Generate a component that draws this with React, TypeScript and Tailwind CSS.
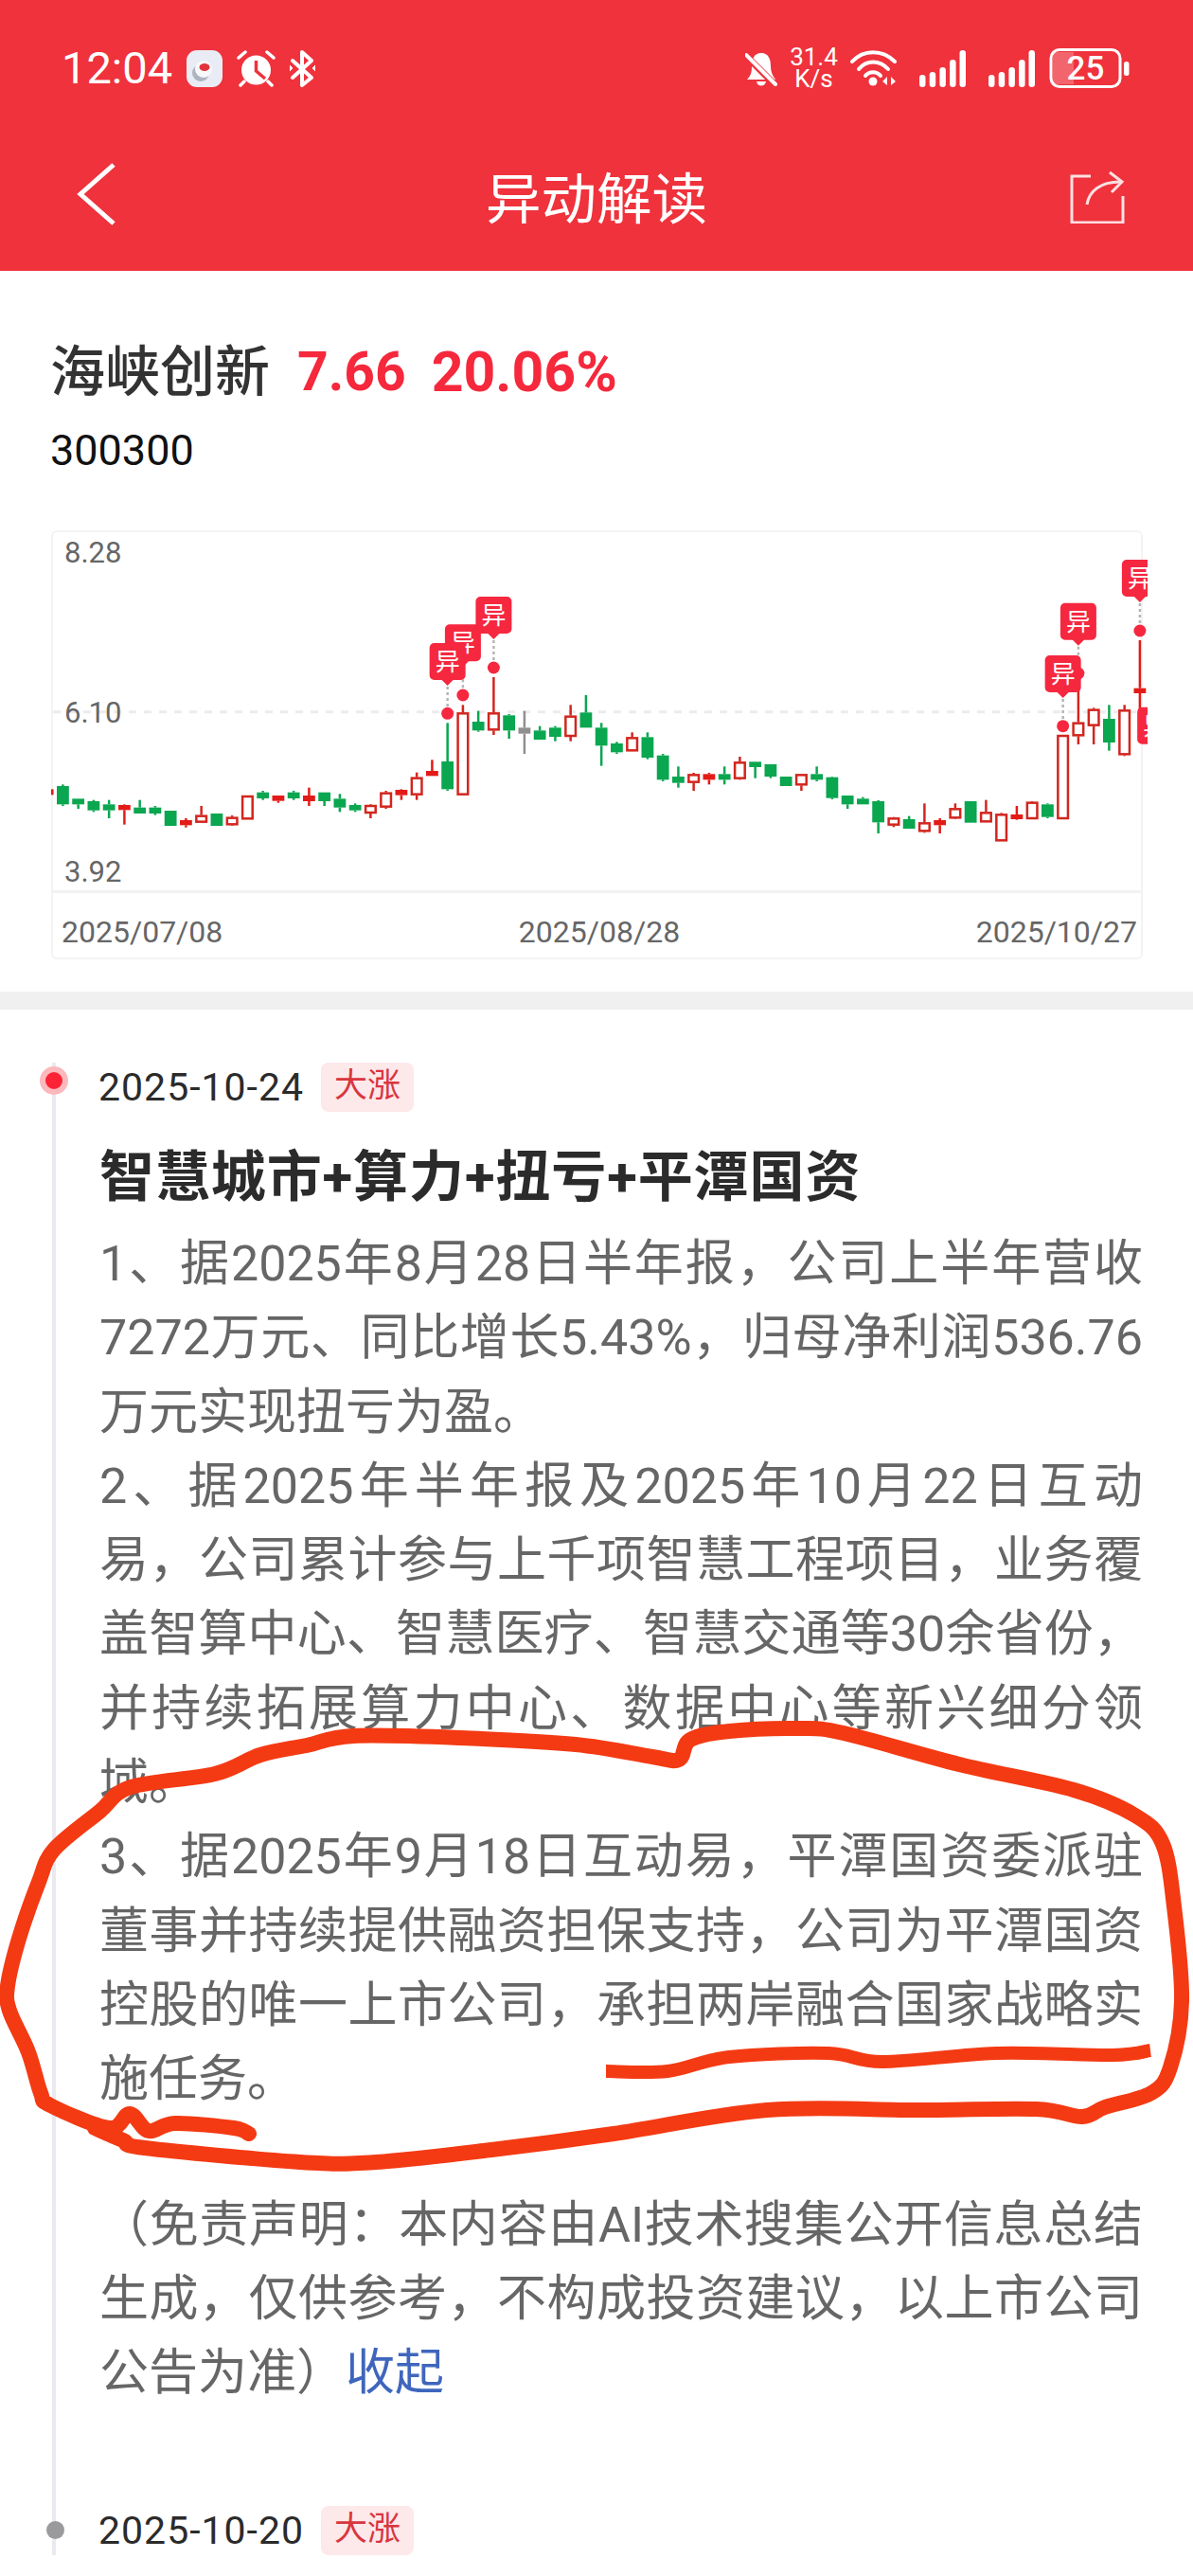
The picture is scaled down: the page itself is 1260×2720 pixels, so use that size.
// 异动解读 page: status bar, nav, K-line chart, timeline of moves
type Candle = [string, number, number, number, number];

// kind (g green, r hollow red, f solid red, n grey), wick top, body top, body bottom, wick bottom
const candles: Candle[] = [
  ["f", 850, 850, 868, 868],
  ["g", 835, 840, 898, 903],
  ["g", 880, 880, 898, 912],
  ["g", 884, 888, 917, 922],
  ["g", 884, 898, 917, 942],
  ["f", 898, 900, 916, 962],
  ["g", 884, 908, 927, 927],
  ["g", 903, 908, 927, 932],
  ["g", 918, 918, 966, 966],
  ["f", 942, 948, 964, 971],
  ["r", 903, 932, 956, 956],
  ["g", 927, 927, 966, 966],
  ["r", 933, 938, 964, 966],
  ["r", 870, 870, 946, 946],
  ["g", 855, 860, 879, 884],
  ["f", 870, 870, 887, 893],
  ["g", 855, 860, 879, 884],
  ["f", 845, 870, 888, 903],
  ["g", 860, 860, 888, 903],
  ["g", 865, 880, 908, 922],
  ["g", 895, 900, 917, 922],
  ["r", 898, 900, 927, 942],
  ["r", 855, 860, 908, 912],
  ["f", 850, 852, 869, 884],
  ["r", 797, 812, 869, 884],
  ["f", 757, 792, 808, 808],
  ["g", 640, 762, 850, 855],
  ["r", 583, 607, 869, 869],
  ["g", 602, 636, 664, 668],
  ["r", 495, 607, 664, 678],
  ["g", 612, 616, 664, 690],
  ["n", 602, 655, 674, 738],
  ["g", 650, 664, 693, 693],
  ["g", 650, 655, 684, 698],
  ["r", 583, 617, 684, 698],
  ["g", 552, 607, 655, 655],
  ["g", 640, 655, 712, 776],
  ["g", 700, 705, 733, 738],
  ["r", 670, 685, 730, 730],
  ["g", 670, 685, 750, 755],
  ["g", 738, 743, 820, 825],
  ["g", 778, 810, 830, 845],
  ["r", 798, 802, 830, 855],
  ["f", 798, 802, 820, 835],
  ["g", 778, 802, 820, 835],
  ["r", 747, 763, 818, 820],
  ["g", 763, 763, 780, 815],
  ["g", 771, 771, 810, 815],
  ["g", 810, 810, 840, 840],
  ["r", 802, 802, 838, 855],
  ["g", 778, 802, 820, 825],
  ["g", 810, 812, 878, 882],
  ["g", 870, 870, 898, 912],
  ["g", 875, 880, 898, 898],
  ["g", 885, 888, 955, 990],
  ["r", 938, 940, 965, 970],
  ["g", 935, 945, 975, 975],
  ["r", 895, 955, 985, 988],
  ["f", 942, 948, 964, 990],
  ["r", 895, 910, 943, 945],
  ["g", 888, 888, 956, 956],
  ["r", 884, 922, 955, 955],
  ["r", 925, 928, 1015, 1015],
  ["f", 903, 930, 945, 947],
  ["r", 888, 890, 945, 945],
  ["g", 895, 898, 938, 942],
  ["r", 678, 678, 945, 945],
  ["r", 535, 638, 682, 708],
  ["r", 592, 596, 650, 708],
  ["g", 583, 627, 702, 728],
  ["r", 583, 598, 742, 745],
  ["f", 378, 530, 546, 640],
];

// candle index, badge top, dot centre (same measure as the candle values), draw order matters
const markers = [
  { i: 27, top: 328, dot: 552 },
  { i: 26, top: 387, dot: 610 },
  { i: 29, top: 240, dot: 465 },
  { i: 67, top: 260, dot: 483 },
  { i: 66, top: 426, dot: 650 },
  { i: 71, top: 123, dot: 348 },
  { i: 72, top: 590, dot: 815 },
];

const cx = (i: number) => 50.15 + 16.25 * i;
const cy = (v: number) => 550 + v / 3;

const ink = [
  [263, 2253], [247, 2247], [185, 2242], [157, 2250], [137, 2232], [115, 2247], [53, 2223], [43, 2210], [30, 2167],
  [10, 2123], [8, 2097], [20, 2047], [41, 1987], [57, 1953], [105, 1913], [138, 1887], [227, 1873], [275, 1853],
  [324, 1843], [373, 1833], [486, 1835], [608, 1842], [689, 1855], [717, 1858], [729, 1837], [770, 1828], [843, 1825],
  [891, 1830], [1013, 1863], [1134, 1890], [1199, 1917], [1228, 1947], [1240, 2013], [1248, 2113], [1236, 2183],
  [1216, 2210], [1167, 2225], [1143, 2235], [1094, 2227], [972, 2228], [810, 2228], [648, 2253], [519, 2270],
  [397, 2283], [317, 2283], [153, 2268], [130, 2260], [100, 2247],
];

const underline = [
  [640, 2187], [705, 2187], [770, 2172], [875, 2168], [932, 2177], [1053, 2168], [1175, 2170], [1215, 2165],
];

// smooth line through hand-drawn points
function smooth(pts: number[][]) {
  let d = `M${pts[0][0]} ${pts[0][1]}`;
  for (let k = 0; k < pts.length - 1; k++) {
    const p0 = pts[k - 1] || pts[k];
    const p1 = pts[k];
    const p2 = pts[k + 1];
    const p3 = pts[k + 2] || p2;
    const c1x = p1[0] + (p2[0] - p0[0]) / 6;
    const c1y = p1[1] + (p2[1] - p0[1]) / 6;
    const c2x = p2[0] - (p3[0] - p1[0]) / 6;
    const c2y = p2[1] - (p3[1] - p1[1]) / 6;
    d += ` C${c1x} ${c1y} ${c2x} ${c2y} ${p2[0]} ${p2[1]}`;
  }
  return d;
}

function CandleShape({ c, i }: { c: Candle; i: number }) {
  const [kind, wt, bt, bb, wb] = c;
  const x = cx(i);
  const color = kind === "g" ? "#0aa650" : kind === "f" ? "#e31b17" : kind === "n" ? "#8f8f8f" : "#d2261f";
  const hollow = kind === "r";
  return (
    <g>
      <line x1={x} x2={x} y1={cy(wt)} y2={cy(bt)} stroke={color} strokeWidth={2.5} />
      <line x1={x} x2={x} y1={cy(bb)} y2={cy(wb)} stroke={color} strokeWidth={2.5} />
      {hollow ? (
        <rect x={x - 5.3} y={cy(bt) + 1} width={10.6} height={cy(bb) - cy(bt) - 2} fill="#fff" stroke={color} strokeWidth={2.5} />
      ) : (
        <rect x={x - 6.4} y={cy(bt)} width={12.8} height={cy(bb) - cy(bt)} fill={color} />
      )}
    </g>
  );
}

function Marker({ i, top, dot }: { i: number; top: number; dot: number }) {
  const x = cx(i);
  const t = cy(top);
  return (
    <g>
      <line x1={x} x2={x} y1={t + 46} y2={cy(dot)} stroke="#b5b5b5" strokeWidth={2.5} strokeDasharray="3 3" />
      <circle cx={x} cy={cy(dot)} r={6.5} fill="#f5283f" />
      <path
        d={`M${x - 14} ${t} H${x + 14} a5 5 0 0 1 5 5 V${t + 34} a5 5 0 0 1 -5 5 H${x + 6} L${x} ${t + 45} L${x - 6} ${t + 39} H${x - 14} a5 5 0 0 1 -5 -5 V${t + 5} a5 5 0 0 1 5 -5 Z`}
        fill="#f5283f"
      />
      <text x={x} y={t + 29} textAnchor="middle" fontSize={26} fill="#fff" fontFamily="'Noto Sans CJK SC', sans-serif">
        异
      </text>
    </g>
  );
}

function KChart() {
  return (
    <div className="ml-[54px] w-[1153px] h-[453px] border-2 border-[#f3f3f3] rounded-[6px] flex flex-col">
      <div className="relative h-[381px] border-b-[3px] border-[#f2f2f2]">
        <svg className="absolute -left-[2px] -top-[2px] block" width={1158} height={381} viewBox="54 560 1158 381">
          <line x1={56} x2={1212} y1={751.7} y2={751.7} stroke="#ececec" strokeWidth={3} strokeDasharray="8 8" />
          {candles.map((c, i) => (
            <CandleShape key={i} c={c} i={i} />
          ))}
          {markers.map((m) => (
            <Marker key={m.i} {...m} />
          ))}
        </svg>
        <span className="absolute left-[12px] top-[4px] text-[31px] leading-[36px] text-[#666]">8.28</span>
        <span className="absolute left-[12px] top-[173px] text-[31px] leading-[36px] text-[#666]">6.10</span>
        <span className="absolute left-[12px] top-[341px] text-[31px] leading-[36px] text-[#666]">3.92</span>
      </div>
      <div className="flex justify-between pl-[9px] pr-[4px] pt-[23px] text-[32px] leading-[36px] text-[#666]">
        <span>2025/07/08</span>
        <span>2025/08/28</span>
        <span>2025/10/27</span>
      </div>
    </div>
  );
}

function StatusBar() {
  return (
    <div className="mt-[50px] h-[44px] flex items-center justify-between pl-[65px] pr-[67px] text-white">
      <div className="flex items-center">
        <span className="text-[47px] leading-[44px] w-[132px]">12:04</span>
        <svg width={38} height={39} viewBox="0 0 38 39">
          <rect width={38} height={39} rx={11} fill="#e9ecf4" />
          <circle cx={15} cy={24} r={9} fill="#aeb3c0" />
          <circle cx={18} cy={20} r={9} fill="#f7f8fb" />
          <ellipse cx={19} cy={18} rx={5.5} ry={4} fill="#e0343c" />
        </svg>
        <svg className="ml-[15px]" width={41} height={39} viewBox="0 0 41 39">
          <circle cx={20.5} cy={21} r={15.5} fill="#fff" />
          <path d="M20.5 11 V22 L30 30" stroke="#ef323c" strokeWidth={3.5} fill="none" />
          <path d="M2 8 L9 2 M39 8 L32 2 M8 33 L4 37 M33 33 L37 37" stroke="#fff" strokeWidth={3.5} strokeLinecap="round" />
        </svg>
        <svg className="ml-[15px]" width={27} height={39} viewBox="0 0 27 39" fill="none" stroke="#fff" strokeWidth={4} strokeLinejoin="round" strokeLinecap="round">
          <path d="M3 11 L23 29 L13 37 V2 L23 11 L3 29" />
          <path d="M0 16 L3 19 L0 22 Z M27 16 L24 19 L27 22 Z" fill="#fff" strokeWidth={1} />
        </svg>
      </div>
      <div className="flex items-center">
        <svg width={34} height={39} viewBox="0 0 34 39">
          <path d="M17 3 C25 3 27 10 27 17 C27 23 29 27 32 31 H2 C6 27 7 23 7 17 C7 10 9 3 17 3 Z M12 33 H22 C21 39 13 39 12 33 Z" fill="#fff" />
          <path d="M-1 4 L33 38" stroke="#ef323c" strokeWidth={7} />
          <path d="M1 5 L32 36" stroke="#fff" strokeWidth={4} strokeLinecap="round" />
        </svg>
        <div className="ml-[13px] w-[51px] flex flex-col items-center text-[26px] leading-[23px]">
          <span>31.4</span>
          <span>K/s</span>
        </div>
        <svg className="ml-[13px]" width={49} height={39} viewBox="0 0 49 39" fill="none" stroke="#fff" strokeWidth={4} strokeLinecap="round">
          <path d="M2 12 C14 -1 34 -1 47 12" />
          <path d="M9 20 C17 10 31 10 40 20" />
          <path d="M16 27 C20 22 28 22 32 27" />
          <circle cx={24} cy={33} r={4.5} fill="#fff" stroke="none" />
          <path d="M39 28 V37 L34 33 Z M43 28 V37 L48 33 Z" fill="#fff" stroke="none" />
        </svg>
        <Signal className="ml-[24px]" />
        <Signal className="ml-[24px]" />
        <svg className="ml-[15px]" width={85} height={42} viewBox="0 0 85 42">
          <path d="M8 4 H26 V38 H8 Q4 38 4 34 V8 Q4 4 8 4 Z" fill="#fff" opacity={0.25} />
          <rect x={2} y={1.5} width={73} height={39} rx={9} fill="none" stroke="#fff" strokeWidth={3} />
          <rect x={79} y={14} width={5.5} height={15} rx={2.5} fill="#fff" />
          <text x={38.5} y={33} textAnchor="middle" fontSize={35} fill="#fff" fontWeight={500} fontFamily="Roboto, sans-serif">
            25
          </text>
        </svg>
      </div>
    </div>
  );
}

function Signal({ className }: { className: string }) {
  return (
    <svg className={className} width={49} height={39} viewBox="0 0 49 39" fill="#fff">
      <rect x={0} y={26} width={6.5} height={13} rx={3.2} />
      <rect x={10.7} y={23} width={6.5} height={16} rx={3.2} />
      <rect x={21.4} y={18} width={6.5} height={21} rx={3.2} />
      <rect x={32.1} y={10} width={6.5} height={29} rx={3.2} />
      <rect x={42.5} y={0} width={6.5} height={39} rx={3.2} />
    </svg>
  );
}

function Line({ text, last }: { text: string; last?: boolean }) {
  return <div className={last ? "h-[78.3px]" : "h-[78.3px] text-justify [text-align-last:justify]"}>{text}</div>;
}

function DateRow({ date, active }: { date: string; active?: boolean }) {
  return (
    <div className="relative flex items-center h-[52px]">
      {active ? (
        <span className="absolute -left-[63px] top-[4px] w-[30px] h-[30px] rounded-full bg-[#fbb9bd] flex items-center justify-center">
          <span className="w-[18px] h-[18px] rounded-full bg-[#fb2335]" />
        </span>
      ) : (
        <span className="absolute -left-[56px] top-[16px] w-[19px] h-[19px] rounded-full bg-[#9a9a9c]" />
      )}
      <span className="w-[234px] -ml-[1px] text-[41px] leading-[52px] tracking-[1px] text-[#2b2b2b]">{date}</span>
      <span className="ml-[1px] w-[98px] h-[52px] rounded-[8px] bg-[#fde8ea] text-[#d9363e] text-[35px] leading-[50px] text-center">大涨</span>
    </div>
  );
}

export default function App() {
  return (
    <div className="relative w-[1260px] h-[2720px] overflow-hidden bg-white [font-family:Roboto,'Noto_Sans_CJK_SC',sans-serif]">
      <header className="h-[286px] bg-[#ef323c] flex flex-col">
        <StatusBar />
        <div className="mt-[70px] h-[88px] flex items-center justify-between pl-[70px] pr-[70px] text-white">
          <svg width={60} height={72} viewBox="0 0 60 72" fill="none" stroke="#fff" strokeWidth={5}>
            <polyline points="50,2 15,33 50,64" />
          </svg>
          <span className="pt-[5px] text-[58.5px] leading-[88px]">异动解读</span>
          <svg width={60} height={56} viewBox="0 0 60 56" fill="none" stroke="#fff" strokeWidth={3} opacity={0.85}>
            <path d="M22 6 H2 V55 H56 V27" />
            <path d="M18 36 C20 22 32 12 53 12" />
            <path d="M42 2 L55 12 L44 23" />
          </svg>
        </div>
      </header>

      <section className="pt-[67px]">
        <div className="pl-[53px] flex items-center h-[80px]">
          <span className="text-[58px] leading-[80px] font-medium text-[#333]">海峡创新</span>
          <span className="ml-[29px] text-[57px] leading-[80px] font-bold text-[#f5283c]">7.66</span>
          <span className="ml-[27px] text-[59px] leading-[80px] font-bold text-[#f5283c]">20.06%</span>
        </div>
        <div className="mt-[13px] pl-[53px] text-[45px] leading-[60px] text-[#111]">300300</div>
        <div className="mt-[54px]">
          <KChart />
        </div>
      </section>

      <div className="mt-[34px] h-[19px] bg-[#f0f0f0]" />

      <section className="pt-[60px] pl-[55px] pr-[53px]">
        <div className="border-l-4 border-[#e9e9ef] pl-[46px] h-[1576px]">
          <div className="-mt-[4px]">
            <DateRow date="2025-10-24" active />
          </div>
          <h1 className="mt-[29px] text-[58px] leading-[80px] tracking-[0.9px] font-bold text-[#2b2b2b]">智慧城市+算力+扭亏+平潭国资</h1>
          <div className="mt-[13px] text-[52px] leading-[78.3px] text-[#666]">
            <Line text="1、据2025年8月28日半年报，公司上半年营收" />
            <Line text="7272万元、同比增长5.43%，归母净利润536.76" />
            <Line text="万元实现扭亏为盈。" last />
            <Line text="2、据2025年半年报及2025年10月22日互动" />
            <Line text="易，公司累计参与上千项智慧工程项目，业务覆" />
            <Line text="盖智算中心、智慧医疗、智慧交通等30余省份，" />
            <Line text="并持续拓展算力中心、数据中心等新兴细分领" />
            <Line text="域。" last />
            <Line text="3、据2025年9月18日互动易，平潭国资委派驻" />
            <Line text="董事并持续提供融资担保支持，公司为平潭国资" />
            <Line text="控股的唯一上市公司，承担两岸融合国家战略实" />
            <Line text="施任务。" last />
          </div>
          <div className="mt-[75px] text-[52px] leading-[78.3px] text-[#666]">
            <Line text="（免责声明：本内容由AI技术搜集公开信息总结" />
            <Line text="生成，仅供参考，不构成投资建议，以上市公司" />
            <div className="h-[78.3px]">
              公告为准）<span className="text-[#3f66bd]">收起</span>
            </div>
          </div>
          <div className="mt-[101px]">
            <DateRow date="2025-10-20" />
          </div>
        </div>
      </section>

      {/* hand-drawn marker on top of the screenshot */}
      <svg className="absolute left-0 top-0 pointer-events-none" width={1260} height={2720} viewBox="0 0 1260 2720" fill="none" stroke="#f43a13" strokeLinejoin="round">
        <path d={smooth(ink)} strokeWidth={16} strokeLinecap="round" />
        <path d={smooth(underline)} strokeWidth={14} />
      </svg>
    </div>
  );
}
